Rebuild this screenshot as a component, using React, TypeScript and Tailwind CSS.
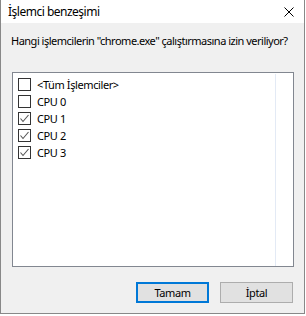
import React from "react";

const rows = [
  { label: "<Tüm İşlemciler>", checked: false },
  { label: "CPU 0", checked: false },
  { label: "CPU 1", checked: true },
  { label: "CPU 2", checked: true },
  { label: "CPU 3", checked: true },
];

function Box({ checked }: { checked: boolean }) {
  return (
    <div className="w-[13px] h-[13px] border border-[#333333] bg-white flex items-center justify-center shrink-0">
      {checked && (
        <svg width="11" height="11" viewBox="0 0 11 11">
          <polyline points="1.5,5.5 4,8.5 9.5,2" fill="none" stroke="#555555" strokeWidth="1.1" />
        </svg>
      )}
    </div>
  );
}

export default function App() {
  return (
    <div
      className="w-[306px] h-[316px] bg-white overflow-hidden"
      style={{ fontFamily: '"Noto Sans", "Liberation Sans", sans-serif' }}
    >
      <div className="w-[305px] h-[314px] border-l border-r border-b border-[#888888] flex flex-col">
        <div className="h-[23px] bg-white flex items-center justify-between pl-[7px] pr-[10px] shrink-0">
          <span className="text-[12px] leading-none tracking-[-0.5px] text-black">İşlemci benzeşimi</span>
          <svg width="10" height="10" viewBox="0 0 10 10">
            <path d="M0.5 0.5 L9.5 9.5 M9.5 0.5 L0.5 9.5" stroke="#000" strokeWidth="1" />
          </svg>
        </div>
        <div className="flex-1 bg-[#f0f0f0] flex flex-col">
          <div className="h-[49px] pl-[10px] pt-[10px] text-[11px] leading-[16px] tracking-[-0.5px] text-black whitespace-nowrap">
            Hangi işlemcilerin "chrome.exe" çalıştırmasına izin veriliyor?
          </div>
          <div className="ml-[11px] w-[282px] h-[195px] border border-[#828790] bg-white flex">
            <div className="w-[263px] border-r border-[#e3eaf5] flex flex-col pt-[2px] pl-[5px] mt-[1px]">
              {rows.map((r) => (
                <div key={r.label} className="h-[17px] flex items-center gap-[6px]">
                  <Box checked={r.checked} />
                  <span className="text-[11px] leading-none tracking-[-0.4px] text-black">{r.label}</span>
                </div>
              ))}
            </div>
          </div>
          <div className="flex justify-end gap-[11px] pr-[11px] mt-[15px]">
            <button className="w-[73px] h-[21px] bg-[#e1e1e1] border-2 border-[#0078d7] text-[11px] leading-none tracking-[-0.4px] text-black flex items-center justify-center">
              Tamam
            </button>
            <button className="w-[73px] h-[21px] bg-[#e1e1e1] border border-[#adadad] text-[11px] leading-none tracking-[-0.4px] text-black flex items-center justify-center">
              İptal
            </button>
          </div>
        </div>
      </div>
    </div>
  );
}
